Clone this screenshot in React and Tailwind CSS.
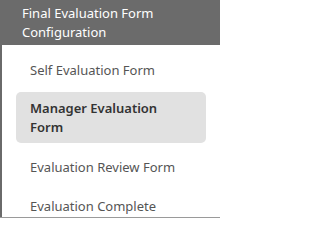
export default function App() {
  const font = { fontFamily: '"Noto Sans", "Open Sans", sans-serif' };
  return (
    <div className="w-[224px] h-[219px] bg-white overflow-hidden" style={font}>
      <div className="w-[220px] h-[218px] flex flex-col border-b border-[#9a9a9a] overflow-hidden">
        <div className="bg-[#6b6b6b] text-white text-[13px] leading-[19px] pl-[22px] pt-[4px] h-[45px] shrink-0">
          Final Evaluation Form
          <br />
          Configuration
        </div>
        <div className="flex-1 border-l-2 border-[#6a6a6a] pl-[14px] pr-[14px] pt-[6px] text-[13px] leading-[19px] text-[#555555]">
          <div className="px-[14px] py-[10px]">Self Evaluation Form</div>
          <div className="mt-[2px] px-[14px] pt-[7px] pb-[6px] bg-[#e1e1e1] rounded-[5px] text-[#333333] font-semibold">
            Manager Evaluation
            <br />
            Form
          </div>
          <div className="mt-[5px] px-[14px] py-[10px]">Evaluation Review Form</div>
          <div className="px-[14px] py-[10px]">Evaluation Complete</div>
        </div>
      </div>
    </div>
  );
}
